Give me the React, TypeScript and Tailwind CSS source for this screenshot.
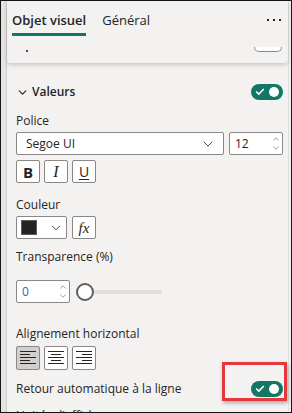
import { Check, ChevronDown, ChevronUp } from "lucide-react";

function Toggle() {
  return (
    <div className="w-[32px] h-[16px] rounded-full bg-[#117865] flex items-center justify-between px-[4px]">
      <Check className="w-[10px] h-[10px] text-white" strokeWidth={4} />
      <div className="w-[10px] h-[10px] rounded-full bg-white" />
    </div>
  );
}

function Spinner() {
  return (
    <div className="flex flex-col items-center text-[#605e5c] -space-y-[1px]">
      <ChevronUp className="w-[10px] h-[10px]" strokeWidth={1.5} />
      <ChevronDown className="w-[10px] h-[10px]" strokeWidth={1.5} />
    </div>
  );
}

function AlignIcon({ mode }: { mode: "left" | "center" | "right" }) {
  const short = 10;
  const full = 16;
  const x = (len: number) => (mode === "left" ? 0 : mode === "center" ? (full - len) / 2 : full - len);
  const lens = [full, short, full, short, full];
  return (
    <svg width="16" height="14" viewBox="0 0 16 14">
      {lens.map((l, i) => (
        <rect key={i} x={x(l)} y={i * 3} width={l} height={1} fill="#252423" />
      ))}
    </svg>
  );
}

const box = "border border-[#8a8886] bg-white rounded-[2px]";

export default function App() {
  return (
    <div className="w-[292px] h-[413px] relative overflow-hidden border border-[#151515] bg-[#f3f2f1] font-['Open_Sans',sans-serif] text-[#252423] flex">
      <div className="w-[6px] shrink-0 bg-[#e5e4e3] border-r border-[#d0cecc]" />
      <div className="flex-1 flex flex-col mr-[3px] border-r border-[#e1dfdd]">
        {/* header card */}
        <div className="relative z-10 h-[62px] shrink-0 bg-[#f3f2f1] rounded-b-[4px] shadow-[0_2px_4px_rgba(0,0,0,0.18)] flex flex-col">
          <div className="flex items-start pl-[5px] pr-[5px] pt-[10px]">
            <div className="text-[13px] font-semibold leading-[19px] pb-[3px] border-b-[3px] border-[#117865]">
              Objet visuel
            </div>
            <div className="ml-[16px] text-[13px] leading-[19px]">Général</div>
            <svg className="ml-auto mt-[8px] mr-[1px]" width="15" height="3" viewBox="0 0 15 3">
              <rect x="0" y="0" width="2" height="2" fill="#252423" />
              <rect x="6" y="0" width="2" height="2" fill="#252423" />
              <rect x="12" y="0" width="2" height="2" fill="#252423" />
            </svg>
          </div>
          <div className="mt-auto mb-[11px] flex items-end pl-[19px] pr-[6px]">
            <div className="w-[2px] h-[2px] bg-[#5c3b7a]" />
            <div className="ml-auto w-[28px] h-[5px] rounded-b-[6px] border border-t-0 border-[#8a8886] bg-white" />
          </div>
        </div>

        {/* section */}
        <div className="flex flex-col pl-[9px] pr-[5px] text-[12px] leading-[18px]">
          <div className="mt-[21px] h-[16px] flex items-center">
            <ChevronDown className="w-[13px] h-[13px]" strokeWidth={2} />
            <span className="ml-[3px] font-semibold text-[12px]">Valeurs</span>
            <div className="ml-auto">
              <Toggle />
            </div>
          </div>

          <div className="mt-[12px]">Police</div>
          <div className="mt-[2px] flex gap-[5px]">
            <div className={`${box} w-[208px] h-[23px] flex items-center pl-[9px] pr-[7px]`}>
              <span>Segoe UI</span>
              <ChevronDown className="ml-auto w-[16px] h-[16px] text-[#323130]" strokeWidth={1.3} />
            </div>
            <div className={`${box} w-[54px] h-[23px] flex items-center pl-[5px] pr-[1px]`}>
              <span>12</span>
              <div className="ml-auto">
                <Spinner />
              </div>
            </div>
          </div>

          <div className="mt-[5px] flex gap-[4px]">
            <div className={`${box} w-[24px] h-[23px] flex items-center justify-center font-bold text-[15px]`}>B</div>
            <div className={`${box} w-[24px] h-[23px] flex items-center justify-center italic font-['Liberation_Serif',serif] text-[16px]`}>
              I
            </div>
            <div className={`${box} w-[24px] h-[23px] flex items-center justify-center text-[14px] underline underline-offset-2`}>U</div>
          </div>

          <div className="mt-[13px]">Couleur</div>
          <div className="mt-[2px] flex gap-[5px]">
            <div className={`${box} w-[51px] h-[23px] flex items-center pl-[4px] pr-[3px]`}>
              <div className="w-[16px] h-[15px] bg-[#252423] border border-[#605e5c]" />
              <ChevronDown className="ml-auto w-[14px] h-[14px] text-[#323130]" strokeWidth={1.5} />
            </div>
            <div className={`${box} w-[24px] h-[23px] flex items-center justify-center italic font-['Liberation_Serif',serif] text-[15px]`}>
              fx
            </div>
          </div>

          <div className="mt-[9px]">Transparence (%)</div>
          <div className="mt-[14px] flex items-center">
            <div className={`${box} w-[54px] h-[23px] flex items-center pl-[5px] pr-[1px]`}>
              <span className="text-[#3a64ad]">0</span>
              <div className="ml-auto">
                <Spinner />
              </div>
            </div>
            <div className="ml-[6px] w-[18px] h-[18px] rounded-full border-2 border-[#605e5c] bg-white shrink-0 relative z-10" />
            <div className="w-[68px] h-[4px] rounded-full bg-[#e1dfdd]" />
          </div>

          <div className="mt-[22px]">Alignement horizontal</div>
          <div className="mt-[3px] flex gap-[4px]">
            <div className="w-[24px] h-[24px] border border-[#8a8886] bg-[#d2d0ce] rounded-[2px] flex items-center justify-center">
              <AlignIcon mode="left" />
            </div>
            <div className={`${box} w-[24px] h-[24px] flex items-center justify-center`}>
              <AlignIcon mode="center" />
            </div>
            <div className={`${box} w-[24px] h-[24px] flex items-center justify-center`}>
              <AlignIcon mode="right" />
            </div>
          </div>

          <div className="mt-[10px] flex items-center h-[18px]">
            <span>Retour automatique à la ligne</span>
            <div className="ml-auto">
              <Toggle />
            </div>
          </div>

          <div className="mt-[9px]">Unités d'affichage</div>
        </div>
      </div>

      <div className="absolute left-[221px] top-[361px] w-[65px] h-[39px] border-[3px] border-[#e5373c] shadow-[1px_2px_4px_rgba(0,0,0,0.3)] z-20" />
    </div>
  );
}
